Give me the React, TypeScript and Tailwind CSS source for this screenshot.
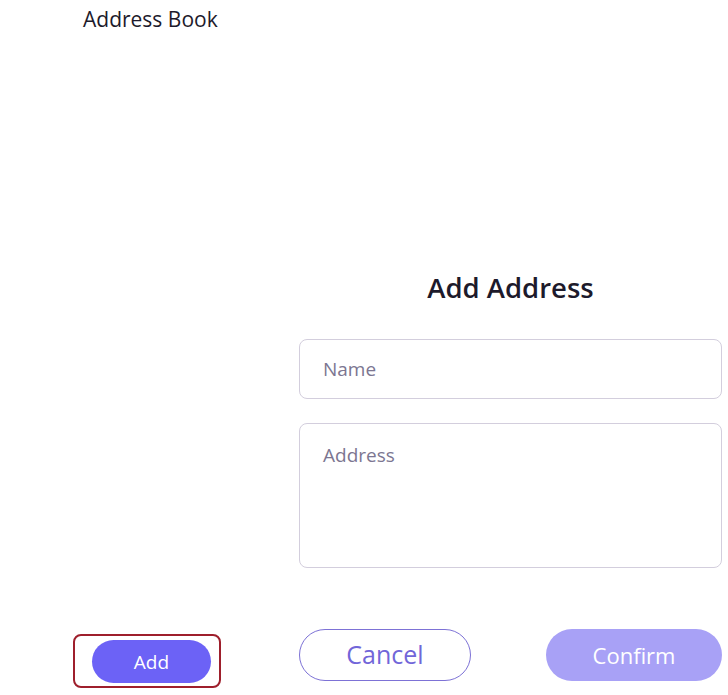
import React from "react";

export default function App() {
  return (
    <div
      className="flex h-[695px] w-[728px] bg-white text-[#1d1a2b]"
      style={{ fontFamily: '"Open Sans", "Noto Sans", sans-serif' }}
    >
      {/* left rail */}
      <div className="flex w-[299px] flex-col justify-between">
        <div className="pl-[83px] pt-[5px] text-[21px] leading-[28px]">Address Book</div>
        <div className="mb-[7px] ml-[73px] flex h-[54px] w-[148px] items-center rounded-[8px] border-2 border-[#9e1f2c] pl-[17px]">
          <button className="h-[43px] w-[119px] rounded-full bg-[#6c62f6] pt-[2px] text-[19px] text-white">
            Add
          </button>
        </div>
      </div>

      {/* form */}
      <div className="flex w-[423px] flex-col">
        <h2 className="mt-[270px] text-center text-[27.5px] font-semibold leading-[36px]">Add Address</h2>
        <input
          placeholder="Name"
          className="mt-[33px] h-[60px] w-full rounded-[8px] border border-[#d3cedd] px-[23px] text-[19px] outline-none placeholder:text-[#7c7691]"
        />
        <textarea
          placeholder="Address"
          className="mt-[24px] h-[145px] w-full resize-none rounded-[8px] border border-[#d3cedd] px-[23px] pt-[17px] text-[19px] outline-none placeholder:text-[#7c7691]"
        />
        <div className="mt-auto mb-[14px] flex justify-between">
          <button className="h-[52px] w-[172px] rounded-full border border-[#7d72d6] text-[25px] text-[#7166d9]">
            Cancel
          </button>
          <button className="h-[52px] w-[176px] rounded-full bg-[#a8a1f6] text-[22px] text-white">
            Confirm
          </button>
        </div>
      </div>
    </div>
  );
}
